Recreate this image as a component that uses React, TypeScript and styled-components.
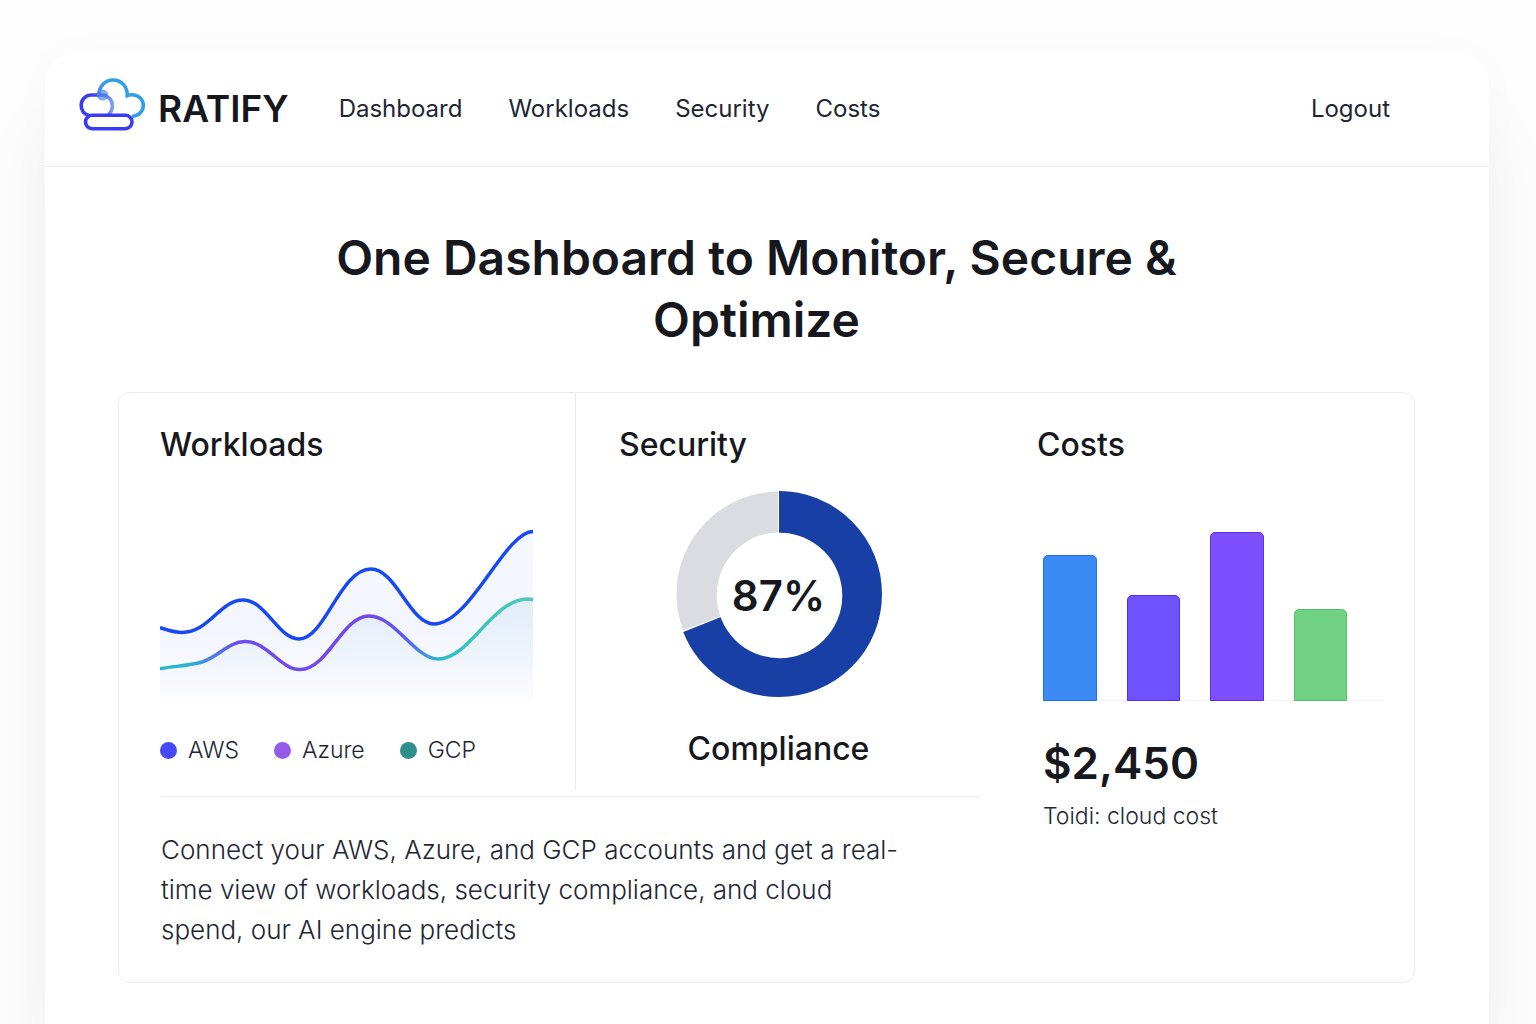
import React from "react";
import styled, { createGlobalStyle } from "styled-components";

const ink = "#16181d";
const slate = "#1e2635";
const line = "#ebebf4";

const GlobalStyle = createGlobalStyle`
  * { box-sizing: border-box; }
  body {
    margin: 0;
    background: #fdfdfd;
    color: ${ink};
    font-family: Inter, "Liberation Sans", sans-serif;
  }
  h1, h2, p, ul, figure { margin: 0; padding: 0; }
`;

const Page = styled.div`
  min-height: 100vh;
  display: flex;
  padding: 52px 47px 0 45px;
  overflow: hidden;
`;

const Window = styled.div`
  flex: 1;
  min-width: 0;
  background: #fff;
  border-radius: 32px 32px 0 0;
  box-shadow: 0 64px 72px rgba(0, 0, 0, 0.05), 0 0 48px rgba(0, 0, 0, 0.02);
`;

const Header = styled.header`
  display: flex;
  align-items: center;
  height: 115px;
  padding: 0 99px 0 33px;
  border-bottom: 1px solid ${line};
`;

const Brand = styled.a`
  display: flex;
  align-items: center;
  gap: 12px;
  margin-right: 50px;
  color: ${ink};
  font-size: 37px;
  font-weight: 600;
  line-height: 48px;
  text-decoration: none;
`;

const Nav = styled.nav`
  display: flex;
  gap: 46px;
  flex: 1;
`;

const NavLink = styled.a`
  color: ${slate};
  font-size: 24px;
  line-height: 32px;
  text-decoration: none;
`;

const Main = styled.main`
  padding: 60px 74px 40px 73px;
`;

const Title = styled.h1`
  max-width: 900px;
  margin: 0 auto 41px;
  padding-right: 20px;
  font-size: 48px;
  font-weight: 600;
  line-height: 62px;
  text-align: center;
`;

const Card = styled.div`
  display: grid;
  grid-template-columns: 861fr 434fr;
  border: 1px solid ${line};
  border-radius: 12px;
`;

const Overview = styled.div`
  min-width: 0;
`;

const Metrics = styled.div`
  display: grid;
  grid-template-columns: 457fr 404fr;
`;

const Panel = styled.section<{ $divided?: boolean; $start: number; $end: number }>`
  padding: 32px ${(p) => p.$end}px 21px ${(p) => p.$start}px;
  border-right: ${(p) => (p.$divided ? `1px solid ${line}` : "0")};
`;

const PanelTitle = styled.h2`
  font-size: 32px;
  font-weight: 500;
  line-height: 40px;
`;

const LineChart = styled.svg`
  display: block;
  width: 100%;
  height: auto;
  margin-top: 55px;
`;

const Legend = styled.ul`
  display: flex;
  gap: 35px;
  margin-top: 30px;
  list-style: none;
`;

const LegendItem = styled.li<{ $color: string }>`
  display: flex;
  align-items: center;
  gap: 11px;
  color: ${slate};
  font-size: 23px;
  font-weight: 300;
  line-height: 32px;

  &::before {
    content: "";
    width: 17px;
    height: 17px;
    border-radius: 50%;
    background: ${(p) => p.$color};
  }
`;

const Gauge = styled.figure`
  display: flex;
  flex-direction: column;
  align-items: center;
  gap: 32px;
  margin-top: 26px;
`;

const Ring = styled.div`
  display: grid;
  place-items: center;
  width: 206px;
  height: 206px;

  > * { grid-area: 1 / 1; }
`;

const RingValue = styled.strong`
  padding-top: 4px;
  font-size: 42px;
  font-weight: 600;
  line-height: 56px;
`;

const Caption = styled.figcaption`
  font-size: 32px;
  font-weight: 500;
  line-height: 40px;
`;

const Description = styled.p`
  margin: 6px 0 0 42px;
  padding: 33px 76px 32px 0;
  border-top: 1px solid ${line};
  color: ${slate};
  font-size: 26px;
  font-weight: 300;
  line-height: 40px;
`;

const BarChart = styled.div`
  display: flex;
  align-items: flex-end;
  gap: 30px;
  height: 170px;
  margin: 66px 0 34px 6px;
  padding-right: 36px;
  border-bottom: 1px solid #f2f2f5;
`;

const Bar = styled.div<{ $height: number; $fill: string; $edge: string }>`
  flex: 1;
  height: ${(p) => p.$height}px;
  margin-bottom: -1px;
  border: 1px solid ${(p) => p.$edge};
  border-radius: 5px 5px 0 0;
  background: ${(p) => p.$fill};
`;

const Amount = styled.p`
  padding-left: 6px;
  font-size: 44px;
  font-weight: 600;
  line-height: 56px;
`;

const AmountNote = styled.p`
  margin-top: 9px;
  padding-left: 6px;
  color: ${slate};
  font-size: 23px;
  font-weight: 300;
  line-height: 32px;
`;

const sections = ["Dashboard", "Workloads", "Security", "Costs"];

const providers = [
  { name: "AWS", color: "#4549f7" },
  { name: "Azure", color: "#945ae8" },
  { name: "GCP", color: "#2e8f8c" },
];

const bars = [
  { height: 146, fill: "#3c8bf5", edge: "#1f6fea" },
  { height: 106, fill: "#6e52ff", edge: "#4f2cf0" },
  { height: 169, fill: "#7c50ff", edge: "#5e2cf5" },
  { height: 92, fill: "#70d182", edge: "#52c268" },
];

const awsLine =
  "M161 628C168 630 174 632.5 182 632.5C209 632.5 220 600 243 600C266 600 278 639 299 639C325 639 340 569 371 569C396 569 410 624 434 624C470 624 505 531.5 533 531.5";
const blendLine =
  "M161 668.5C175 666 188 666 202 662C218 657 229 641.5 245 641.5C268 641.5 280 669.5 300 669.5C328 669.5 342 616 369 616C395 616 415 659 438 659C470 659 492 599 528 599L533 599.5";

function Logo() {
  return (
    <svg width="68" height="66" viewBox="78 76 68 66" fill="none" strokeWidth="3.6" aria-hidden="true">
      <defs>
        <linearGradient id="sky" gradientUnits="userSpaceOnUse" x1="98" y1="98" x2="130" y2="90">
          <stop offset="0" stopColor="#5b83ee" />
          <stop offset="0.35" stopColor="#2f9fe8" />
          <stop offset="1" stopColor="#2f9fe8" />
        </linearGradient>
        <linearGradient id="puff" gradientUnits="userSpaceOnUse" x1="88" y1="104" x2="113" y2="104">
          <stop offset="0" stopColor="#3b3cf5" />
          <stop offset="0.4" stopColor="#4a4cf2" />
          <stop offset="1" stopColor="#7fa3f3" />
        </linearGradient>
      </defs>
      <path d="M98.5 97C98.5 86.5 105 80 113 80C121.500 80 127.300 86.500 127.300 95.500C128.500 95 130 94.700 132 94.700C138.500 94.700 143.300 99.400 143.300 105.300C143.300 111.400 138.500 116.300 132 116.300" stroke="url(#sky)" />
      <path d="M88.500 115.500C84.500 114 81.200 110.300 81.200 105.200C81.200 99.400 85.700 95 91.500 95H101C107.500 95 112.400 99.400 112.400 105.500C112.400 109.500 110.500 113 108 115.300" stroke="url(#puff)" />
      <circle cx="102.500" cy="95" r="5.600" fill="#4a86e8" fillOpacity="0.7" />
      <rect x="85.500" y="115.300" width="46.500" height="13.400" rx="6.700" stroke="#393cf6" />
    </svg>
  );
}

function WorkloadTrend() {
  return (
    <LineChart viewBox="160 520 373 184" fill="none" role="img" aria-label="Workload trend">
      <defs>
        <linearGradient id="awsFill" x1="0" y1="0" x2="0" y2="1">
          <stop offset="0" stopColor="#f5f8ff" />
          <stop offset="0.6" stopColor="#f4f6fe" />
          <stop offset="1" stopColor="#fdfdff" />
        </linearGradient>
        <linearGradient id="blendFill" x1="0" y1="0" x2="0" y2="1">
          <stop offset="0" stopColor="#e1edf8" />
          <stop offset="0.5" stopColor="#edf3fa" />
          <stop offset="1" stopColor="#fdfdfe" />
        </linearGradient>
        <linearGradient id="blendStroke" gradientUnits="userSpaceOnUse" x1="160" y1="0" x2="533" y2="0">
          <stop offset="0" stopColor="#25b9cb" />
          <stop offset="0.08" stopColor="#2fb0d2" />
          <stop offset="0.14" stopColor="#4a7dec" />
          <stop offset="0.2" stopColor="#6a4df0" />
          <stop offset="0.55" stopColor="#7546ea" />
          <stop offset="0.65" stopColor="#5f56f0" />
          <stop offset="0.71" stopColor="#3f93e2" />
          <stop offset="0.76" stopColor="#2bbfcb" />
          <stop offset="1" stopColor="#52c8b8" />
        </linearGradient>
      </defs>
      <path d={`${awsLine}V702H160V628Z`} fill="url(#awsFill)" />
      <path d={`${blendLine}V702H160V668Z`} fill="url(#blendFill)" />
      <path d={awsLine} stroke="#1648f5" strokeWidth="3.500" strokeLinecap="round" />
      <path d={blendLine} stroke="url(#blendStroke)" strokeWidth="3.500" strokeLinecap="round" />
    </LineChart>
  );
}

function ComplianceRing() {
  const radius = 82;
  const length = 2 * Math.PI * radius;
  const share = 248 / 360;
  return (
    <svg width="206" height="206" viewBox="0 0 206 206" fill="none" aria-hidden="true">
      <circle cx="103" cy="103" r={radius} stroke="#dbdce1" strokeWidth="41" />
      <g transform="rotate(-90 103 103)">
        <circle cx="103" cy="103" r={radius} stroke="#fff" strokeWidth="42" strokeDasharray={`${length * share + 1.2} ${length}`} />
        <circle cx="103" cy="103" r={radius} stroke="#173fa6" strokeWidth="42" strokeDasharray={`${length * share} ${length}`} />
      </g>
      <path d="M102.500 0V44" stroke="#fff" strokeWidth="1" />
      <circle cx="103.500" cy="104.500" r="62.800" fill="#fff" />
    </svg>
  );
}

export default function App() {
  return (
    <>
      <GlobalStyle />
      <Page>
        <Window>
          <Header>
            <Brand href="#home">
              <Logo />
              RATIFY
            </Brand>
            <Nav>
              {sections.map((name) => (
                <NavLink key={name} href={`#${name.toLowerCase()}`}>
                  {name}
                </NavLink>
              ))}
            </Nav>
            <NavLink href="#logout">Logout</NavLink>
          </Header>
          <Main>
            <Title>One Dashboard to Monitor, Secure &amp; Optimize</Title>
            <Card>
              <Overview>
                <Metrics>
                  <Panel $divided $start={41} $end={42}>
                    <PanelTitle>Workloads</PanelTitle>
                    <WorkloadTrend />
                    <Legend>
                      {providers.map((p) => (
                        <LegendItem key={p.name} $color={p.color}>
                          {p.name}
                        </LegendItem>
                      ))}
                    </Legend>
                  </Panel>
                  <Panel $start={43} $end={42}>
                    <PanelTitle>Security</PanelTitle>
                    <Gauge>
                      <Ring>
                        <ComplianceRing />
                        <RingValue>87%</RingValue>
                      </Ring>
                      <Caption>Compliance</Caption>
                    </Gauge>
                  </Panel>
                </Metrics>
                <Description>
                  Connect your AWS, Azure, and GCP accounts and get a real-time view of workloads,
                  security compliance, and cloud spend, our AI engine predicts
                </Description>
              </Overview>
              <Panel $start={57} $end={31}>
                <PanelTitle>Costs</PanelTitle>
                <BarChart role="img" aria-label="Cost by provider">
                  {bars.map((b) => (
                    <Bar key={b.height} $height={b.height} $fill={b.fill} $edge={b.edge} />
                  ))}
                </BarChart>
                <Amount>$2,450</Amount>
                <AmountNote>Toidi: cloud cost</AmountNote>
              </Panel>
            </Card>
          </Main>
        </Window>
      </Page>
    </>
  );
}
